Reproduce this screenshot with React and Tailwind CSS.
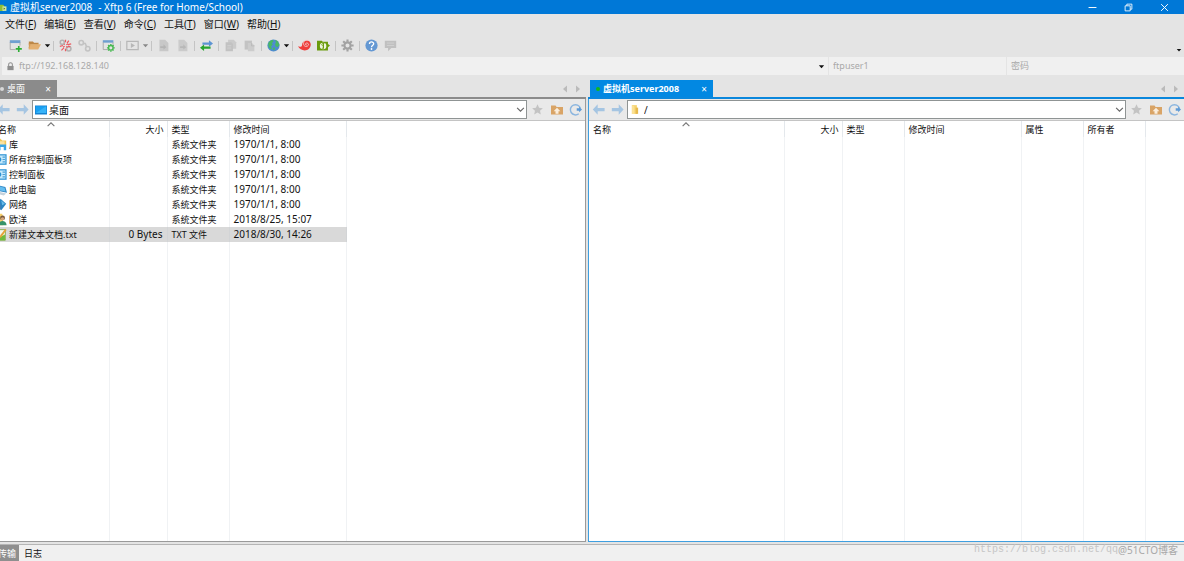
import { useState } from 'react'

const MENUS = [
    ['文件', 'F'], ['编辑', 'E'], ['查看', 'V'], ['命令', 'C'],
    ['工具', 'T'], ['窗口', 'W'], ['帮助', 'H'],
]

const TOOLS = [
    'new', 'open', 'caret', '|', 'disconnect', 'reconnect', '|', 'props', '|',
    'run', 'caretDim', '|', 'docLeft', 'docRight', '|', 'transfer', '|', 'copy', 'paste', '|',
    'globe', 'caret', '|', 'xshell', 'xftp', '|', 'gear', '|', 'help', 'chat',
]

const TOOL_LABELS = {
    new: '新建会话', open: '打开', disconnect: '断开', reconnect: '重新连接', props: '属性',
    run: '执行', docLeft: '向左传输', docRight: '向右传输', transfer: '同步浏览', copy: '复制',
    paste: '粘贴', globe: '编码', xshell: 'Xshell', xftp: 'Xftp', gear: '选项', help: '帮助',
    chat: '反馈', caret: '更多', caretDim: '更多执行选项',
}

const FILES = [
    { icon: 'library', name: '库', size: '', type: '系统文件夹', time: '1970/1/1, 8:00' },
    { icon: 'panel', name: '所有控制面板项', size: '', type: '系统文件夹', time: '1970/1/1, 8:00' },
    { icon: 'panel', name: '控制面板', size: '', type: '系统文件夹', time: '1970/1/1, 8:00' },
    { icon: 'computer', name: '此电脑', size: '', type: '系统文件夹', time: '1970/1/1, 8:00' },
    { icon: 'network', name: '网络', size: '', type: '系统文件夹', time: '1970/1/1, 8:00' },
    { icon: 'user', name: '欧洋', size: '', type: '系统文件夹', time: '2018/8/25, 15:07' },
    { icon: 'text', name: '新建文本文档.txt', size: '0 Bytes', type: 'TXT 文件', time: '2018/8/30, 14:26' },
]

const GEAR = 'M8 2v2M8 12v2M2 8h2M12 8h2M3.8 3.8l1.4 1.4M10.8 10.8l1.4 1.4M3.8 12.2l1.4-1.4M10.8 5.2l1.4-1.4'

const SHAPES = {
    new: (
        <>
            <path d="M1 1.500h13v3.500H1z" fill="#6f9fd0" />
            <path d="M1.500 4v9h6.500M13.500 4v4" fill="none" stroke="#a0a0a0" />
            <path d="M12 8.500v7.500M8.300 12.200h7.500" stroke="#2fae35" strokeWidth="2" />
        </>
    ),
    open: (
        <>
            <path d="M1 3h5l1.500 1.500H13V7H1z" fill="#bd8746" />
            <path d="M3 6.500h13L12.500 13H1V10z" fill="#e3b071" />
            <path d="M1 5v8l2-6z" fill="#d49a56" />
        </>
    ),
    disconnect: (
        <>
            <g fill="none" stroke="#b4b4b4" strokeWidth="2">
                <circle cx="4" cy="4" r="2.500" />
                <circle cx="12" cy="12" r="2.700" />
            </g>
            <path d="M8 1v3M12 2l-2 3M15 6l-4 1M1 9l4-1M3 14l3-3M8 12v3M6 6l1 1M9 9l1.500 1.500M14 9.500l-3-.5M5 10l2-1M9 7l2-1" stroke="#ec5a60" strokeWidth="1.500" />
        </>
    ),
    reconnect: (
        <g fill="none" stroke="#c3c3c3" strokeWidth="2">
            <circle cx="4" cy="4.500" r="2.700" />
            <circle cx="12" cy="12" r="2.700" />
            <path d="M6.500 5.500H9l1.500 4" />
        </g>
    ),
    props: (
        <>
            <path d="M1 1.500h13v3H1z" fill="#6f9fd0" />
            <path d="M1.500 4v9h6M13.500 4v3" fill="none" stroke="#a0a0a0" />
            <g transform="translate(4.500 4.500) scale(.8)" fill="none" stroke="#48b951" strokeWidth="2.200">
                <circle cx="8" cy="8" r="3.500" />
                <path d={GEAR} />
            </g>
        </>
    ),
    run: (
        <>
            <path d="M1 3h14v10H1z" fill="none" stroke="#b7b7b7" strokeWidth="1.500" />
            <path d="M6 5l5 3-5 3z" fill="#b7b7b7" />
        </>
    ),
    docLeft: (
        <>
            <path d="M3 1h7l4 4v10H3z" fill="#c8c8c8" />
            <path d="M4 9h4V6.500L11.500 10 8 13v-2H4z" fill="#b4b4b4" />
        </>
    ),
    docRight: (
        <>
            <path d="M3 1h7l4 4v10H3z" fill="#cbcbcb" />
            <path d="M5 9h4V6.500L12.500 10 9 13v-2H5z" fill="#b8b8b8" />
        </>
    ),
    transfer: (
        <>
            <path d="M3 4.200h8V1.500l5 4-5 4V7H3z" fill="#5c93d2" />
            <path d="M13 9.200H5V6.800l-5 4 5 4V12h8z" fill="#27a52f" />
        </>
    ),
    copy: (
        <>
            <path d="M5 1h7l3 3v8H5z" fill="#cbcbcb" />
            <path d="M2 4h7l2 2v9H2z" fill="#c2c2c2" />
            <path d="M4 8h5M4 10h5M4 12h5" stroke="#d0d0d0" />
        </>
    ),
    paste: (
        <>
            <path d="M2 2h9v11H2z" fill="#c3c3c3" />
            <path d="M6 5h5l3 3v7H6z" fill="#cccccc" />
            <path d="M10.500 5v3.500H14" fill="none" stroke="#b8b8b8" />
        </>
    ),
    globe: (
        <>
            <circle cx="8" cy="8" r="7.500" fill="#4f8cd0" />
            <path d="M1.500 5l2.500-3 3-1 1 2-2 2 1 2-2 2 1 3-1 1-3-3zM10 1l3 1.500 2.300 4.500-2.300 3-2.500-1-.5-3 1-2zM8 10l2 1-1 3-2-1z" fill="#48b865" />
        </>
    ),
    xshell: (
        <>
            <path d="M0 9c2 1 5 1 5-2 0-4 4-6 8-5 3.500 2 3.500 7 .5 10-4 4-11 2-13.500-3z" fill="#ef3d3b" />
            <path d="M14 2c-5-2-8 1-7 5 1 3 5 3 6 0 0-2-3-3-4-1 0 1 1 2 2 1" fill="none" stroke="#f4d6d5" strokeWidth="1" />
        </>
    ),
    xftp: (
        <>
            <path d="M0 2h6l1 1.500h6.500V6L16 8l-2.500 2v4H0z" fill="#6a9b0c" />
            <circle cx="7.500" cy="8.500" r="4" fill="#eef4df" />
            <path d="M9 5.500c-3-1-4 2-2 3s1 3-1 3M8 5v7" fill="none" stroke="#6a9b0c" strokeWidth="1.200" />
        </>
    ),
    gear: (
        <g fill="none" stroke="#a2a2a2" strokeWidth="2.600">
            <circle cx="8" cy="8" r="3.800" />
            <path d="M8 .5v3M8 12.500v3M.5 8h3M12.500 8h3M2.700 2.700l2 2M11.300 11.300l2 2M2.700 13.300l2-2M11.300 4.700l2-2" />
        </g>
    ),
    help: (
        <>
            <circle cx="8" cy="8" r="7.500" fill="#6498d3" />
            <path d="M5.500 6.200c0-3.500 5.200-3.200 5.200-.4C10.700 7.500 8 7.700 8 10" fill="none" stroke="#fff" strokeWidth="1.600" />
            <circle cx="8" cy="12.300" r="1.100" fill="#fff" />
        </>
    ),
    chat: (
        <>
            <path d="M1 2h14v9H9l-4 4v-4H1z" fill="#c0c0c0" />
            <path d="M3.500 5h9M3.500 8h9" stroke="#d4d4d4" />
        </>
    ),
    lock: (
        <>
            <path d="M2.500 7h11v7.500h-11z" fill="#8f8f8f" />
            <path d="M4.700 8V4.500c0-4 6.600-4 6.600 0V8" fill="none" stroke="#8f8f8f" strokeWidth="1.800" />
        </>
    ),
    back: <path d="M1 8l6-6.500V6h8.500v4H7v4.500z" fill="#a5c5e2" />,
    forward: <path d="M15.500 8L9.500 1.500V6H1v4h8.500v4.500z" fill="#a5c5e2" />,
    star: <path d="M8 .5l2.300 5 5.500.6-4.100 3.700 1.100 5.500L8 12.500l-4.800 2.800 1.100-5.500L.2 6.100l5.500-.6z" fill="#c3c3c3" />,
    up: (
        <>
            <path d="M0 2h6l1.500 2H16v10H0z" fill="#d9a466" />
            <path d="M8 5l4.500 4.500H10V13H6V9.500H3.500z" fill="#fbeedd" />
        </>
    ),
    refresh: (
        <>
            <path d="M12 13.200A6.300 6.300 0 1 1 14 6.500" fill="none" stroke="#8cb6df" strokeWidth="1.800" />
            <path d="M9.500 6.500h3V4.500L16 8l-3.500 3.500v-2h-3z" fill="#5f9bd6" />
        </>
    ),
    desktop: (
        <>
            <path d="M0 2h16v12H0z" fill="#1583d2" />
            <path d="M1 3h14v9H1z" fill="#18a0f2" />
            <path d="M1 12L15 3v9z" fill="#36b3f8" />
        </>
    ),
    folder: (
        <>
            <path d="M3 1h8v14H3z" fill="#f6d470" />
            <path d="M9 5h4v10H9z" fill="#e6b94d" />
            <path d="M3 1l4 2v12H3z" fill="#fbe194" />
        </>
    ),
    library: (
        <>
            <path d="M2 1h6l2 2h5v6H2z" fill="#f3c656" />
            <path d="M4 4h9v5H4z" fill="#fbe3a0" />
            <path d="M5 8h10v7h-3v-4H8v4H5z" fill="#3aa5e4" />
        </>
    ),
    panel: (
        <>
            <path d="M0 1.500h15.500v13H0z" fill="#2d93d4" />
            <path d="M1.500 3h12.500v10H1.500z" fill="#c6e9fb" />
            <circle cx="6" cy="8" r="3" fill="#2d93d4" />
            <path d="M10.500 5h3M10.500 8h3M10.500 11h3" stroke="#4ba0d6" strokeWidth="1.400" />
        </>
    ),
    computer: (
        <>
            <path d="M2 2l12 3 2 7L3 9z" fill="#2f86c4" />
            <path d="M3.500 3.500l9.500 2.300 1.300 4.700-9.800-2z" fill="#64bdf0" />
            <path d="M3 10l12 3-3 2.500L1 12z" fill="#c5d2dc" />
        </>
    ),
    network: (
        <>
            <path d="M8 1l7 6-6 8-6-4z" fill="#2b85c2" />
            <path d="M9 3l4.500 4L10 9z" fill="#69bce9" />
            <circle cx="5" cy="11" r="4" fill="#3f7fb4" />
        </>
    ),
    user: (
        <>
            <path d="M1 1h9l1 3v11H1z" fill="#f6d06b" />
            <circle cx="10.500" cy="6" r="3" fill="#7a5a3d" />
            <path d="M5.500 15c0-7 10-7 10 0z" fill="#36936a" />
            <circle cx="10.500" cy="7.200" r="2" fill="#d7a77e" />
        </>
    ),
    text: (
        <>
            <path d="M1 2h13v13H1z" fill="#f7f7ec" stroke="#78a63c" />
            <path d="M1.500 8l6 3 6-3v7h-12z" fill="#6fbb3c" />
            <path d="M6 11L14 1l1.500 1.500-7 9.500z" fill="#e4a336" />
        </>
    ),
    app: (
        <>
            <path d="M2 3h7l2 2v9H2z" fill="#8fbf35" />
            <path d="M8 6h7v8H8z" fill="#d5e8a4" />
            <path d="M10 8l3 2-3 2z" fill="#4b7c0d" />
        </>
    ),
    caret: <path d="M2 5h12l-6 7z" fill="#111" />,
    caretDim: <path d="M2 5h12l-6 7z" fill="#888" />,
    left: <path d="M12 1v14L4 8z" fill="#bbb" />,
    right: <path d="M4 1v14l8-7z" fill="#bbb" />,
    down: <path d="M2 5l6 6 6-6" fill="none" stroke="#666" strokeWidth="2" />,
    sort: <path d="M2 11l6-6 6 6" fill="none" stroke="#777" strokeWidth="2" />,
    min: <path d="M1 8h14" stroke="#fff" strokeWidth="1.700" />,
    max: <path d="M2 5h9v9H2zM5 5V2h9v9h-3" fill="none" stroke="#fff" strokeWidth="1.500" />,
    close: <path d="M2 2l12 12M14 2L2 14" stroke="#fff" strokeWidth="1.700" />,
}

function Icon({ name, className = 'w-[13px] h-[13px]' }) {
    return (
        <svg viewBox="0 0 16 16" aria-hidden="true" className={`shrink-0 ${className}`}>
            {SHAPES[name]}
        </svg>
    )
}

function IconButton({ name, label, className = 'w-[19px]', iconClass }) {
    return (
        <button type="button" aria-label={label} className={`flex shrink-0 items-center justify-center ${className}`}>
            <Icon name={name} className={iconClass} />
        </button>
    )
}

function TitleBar() {
    return (
        <header className="flex h-[14px] shrink-0 items-center bg-[#0078d7] pl-1 text-white">
            <Icon name="app" className="w-[9px] h-[9px]" />
            <h1 className="ml-[3px] flex gap-[6px] whitespace-nowrap text-[10px] leading-[12px]">
                <span>虚拟机server2008</span>
                <span>- Xftp 6 (Free for Home/School)</span>
            </h1>
            <div className="ml-auto flex pr-[2px]">
                <IconButton name="min" label="最小化" className="w-9" iconClass="w-[9px] h-[9px]" />
                <IconButton name="max" label="还原" className="w-9" iconClass="w-[9px] h-[9px]" />
                <IconButton name="close" label="关闭" className="w-9" iconClass="w-[9px] h-[9px]" />
            </div>
        </header>
    )
}

function Toolbar() {
    return (
        <div className="flex h-[23px] shrink-0 items-center pl-3">
            {TOOLS.map((t, i) => {
                if (t === '|') return <span key={i} className="mx-[2px] h-[10px] w-px bg-[#c4c4c4]" />
                if (t.startsWith('caret')) {
                    return <IconButton key={i} name={t} label={TOOL_LABELS[t]} className="w-[7px]" iconClass="w-[7px] h-[7px]" />
                }
                return <IconButton key={i} name={t} label={TOOL_LABELS[t]} />
            })}
            <IconButton name="caret" label="工具栏选项" className="ml-auto w-[10px] self-end pb-[4px]" iconClass="w-[6px] h-[6px]" />
        </div>
    )
}

function AddressBar() {
    const field = 'min-w-0 text-[9px] leading-[12px] outline-none placeholder:text-[#a9a9a9]'
    return (
        <form className="ml-2 flex h-[18px] shrink-0 gap-px text-[#a9a9a9]">
            <div className="flex flex-1 items-center bg-[#f0f0f0] pl-1">
                <Icon name="lock" className="w-[9px] h-[9px]" />
                <input aria-label="主机" className={`${field} ml-1 flex-1`} defaultValue="ftp://192.168.128.140" />
                <IconButton name="caret" label="历史记录" className="w-[14px]" iconClass="w-[7px] h-[7px]" />
            </div>
            <input aria-label="用户名" className={`${field} w-[177px] bg-[#f0f0f0] px-1`} placeholder="ftpuser1" />
            <input aria-label="密码" type="password" className={`${field} w-[177px] bg-[#f0f0f0] px-1`} placeholder="密码" />
        </form>
    )
}

function Pane({ tab, remote, path, pathIcon, columns, files = [], className }) {
    const [value, setValue] = useState(path)
    const [selected, setSelected] = useState(files.length - 1)

    return (
        <section className={`flex min-w-0 flex-col ${className}`}>
            {/* Session tab */}
            <div className={`flex h-[19px] shrink-0 items-stretch border-b-2 ${remote ? 'border-[#0a87dc] pl-[2px]' : 'border-[#8b8b8b]'}`}>
                <div className={`flex items-center text-[9px] leading-[12px] text-white ${remote ? 'w-[123px] bg-[#0288e2] font-bold' : 'w-[63px] bg-[#8b8b8b]'}`}>
                    <span className={`mx-[6px] size-1 shrink-0 rounded-full ${remote ? 'bg-[#12b81b]' : 'bg-[#d8d8d8]'}`} />
                    <span className="-ml-[3px] whitespace-nowrap">{tab}</span>
                    <button type="button" aria-label="关闭标签" className="ml-auto mr-[6px] text-[10px] leading-[12px] font-normal">×</button>
                </div>
                <div className="ml-auto flex pr-[2px]">
                    <IconButton name="left" label="上一个标签" className="w-[13px]" iconClass="w-[8px] h-[8px]" />
                    <IconButton name="right" label="下一个标签" className="w-[13px]" iconClass="w-[8px] h-[8px]" />
                </div>
            </div>

            <div className={`flex min-h-0 flex-1 flex-col border-b ${remote ? 'border-l border-[#3f9fe0]' : 'border-r border-[#9a9a9a]'}`}>
                {/* Path */}
                <div className="flex h-[22px] shrink-0 items-center border-b border-[#c4c4c4] bg-[#e9e9e9]">
                    <IconButton name="back" label="后退" />
                    <IconButton name="forward" label="前进" />
                    <div className="flex h-[19px] min-w-0 flex-1 items-center border border-[#8f9494] bg-white pl-[2px]">
                        <Icon name={pathIcon} className={remote ? 'w-[10px] h-[11px]' : 'w-[12px] h-[12px]'} />
                        <input aria-label={`${tab} 路径`} value={value} onChange={e => setValue(e.target.value)}
                               className={`min-w-0 flex-1 bg-transparent text-[10px] leading-[14px] outline-none ${remote ? 'ml-1' : 'ml-[2px]'}`} />
                        <IconButton name="down" label="展开路径" className="w-3" iconClass="w-[9px] h-[9px]" />
                    </div>
                    <IconButton name="star" label="收藏" className="ml-px w-[19px]" iconClass="w-[11px] h-[11px]" />
                    <IconButton name="up" label="上级目录" iconClass="w-[12px] h-[12px]" />
                    <IconButton name="refresh" label="刷新" />
                </div>

                {/* File list, last row keeps the column lines running to the bottom */}
                <div className="min-h-0 flex-1 bg-white">
                    <table className="h-full w-full table-fixed border-collapse text-[9px] leading-[15px]">
                        <colgroup>
                            {columns.map(c => <col key={c.label} className={c.width} />)}
                            <col />
                        </colgroup>
                        <thead>
                            <tr className="h-[16px]">
                                {columns.map((c, i) => (
                                    <th key={c.label} scope="col"
                                        className={`relative whitespace-nowrap border-r border-[#e4e8ec] p-0 font-normal ${i === 1 ? 'pr-[3px] text-right' : 'pl-1 text-left'}`}>
                                        {c.label}
                                        {i === 0 && <Icon name="sort" className="absolute left-1/2 -top-px h-[9px] w-[9px] -translate-x-1/2" />}
                                    </th>
                                ))}
                                <td />
                            </tr>
                        </thead>
                        <tbody>
                            {files.map((f, i) => {
                                const cell = `whitespace-nowrap border-r p-0 ${i === selected ? 'border-[#d2d4d6] bg-[#d9d9d9]' : 'border-[#f0f2f4]'}`
                                return (
                                    <tr key={f.name} className="h-[15px]" onClick={() => setSelected(i)}>
                                        <td className={cell}>
                                            <div className="flex items-center gap-[2px]">
                                                <Icon name={f.icon} />
                                                <span>{f.name}</span>
                                            </div>
                                        </td>
                                        <td className={`${cell} pr-1 text-right text-[10px]`}>{f.size}</td>
                                        <td className={`${cell} pl-1`}>{f.type}</td>
                                        <td className={`${cell} pl-1 text-[10px]`}>{f.time}</td>
                                        <td />
                                    </tr>
                                )
                            })}
                            <tr>
                                {columns.map(c => <td key={c.label} className="border-r border-[#f0f2f4] p-0" />)}
                                <td />
                            </tr>
                        </tbody>
                    </table>
                </div>
            </div>
        </section>
    )
}

const LOCAL_COLUMNS = [
    { label: '名称', width: 'w-[115px]' },
    { label: '大小', width: 'w-[58px]' },
    { label: '类型', width: 'w-[62px]' },
    { label: '修改时间', width: 'w-[117px]' },
]

const REMOTE_COLUMNS = [
    { label: '名称', width: 'w-[195px]' },
    { label: '大小', width: 'w-[58px]' },
    { label: '类型', width: 'w-[62px]' },
    { label: '修改时间', width: 'w-[117px]' },
    { label: '属性', width: 'w-[62px]' },
    { label: '所有者', width: 'w-[62px]' },
]

export default function App() {
    return (
        <div className="relative h-screen overflow-hidden bg-[#e4e4e4] font-['Noto_Sans','Noto_Sans_CJK_SC',sans-serif] text-[#111]">
            <div className="-ml-[6px] flex h-full flex-col">
                <TitleBar />

                <nav className="flex h-5 shrink-0 items-center gap-2 pl-[11px]">
                    {MENUS.map(([label, key]) => (
                        <button key={key} type="button" className="whitespace-nowrap text-[10px] leading-[14px]">
                            {label}(<u>{key}</u>)
                        </button>
                    ))}
                </nav>

                <Toolbar />
                <AddressBar />

                <main className="mt-[5px] flex min-h-0 flex-1 gap-[2px]">
                    <Pane tab="桌面" path="桌面" pathIcon="desktop" columns={LOCAL_COLUMNS} files={FILES} className="flex-[592]" />
                    <Pane tab="虚拟机server2008" remote path="/" pathIcon="folder" columns={REMOTE_COLUMNS} className="flex-[596]" />
                </main>

                <footer className="mt-[2px] flex h-[17px] shrink-0 border-t border-[#b5b5b5] bg-[#f0f0f0] text-[9px] leading-[18px]">
                    <button type="button" className="w-[25px] bg-[#8f8f8f] pl-1 text-left text-white">传输</button>
                    <button type="button" className="px-[5px]">日志</button>
                </footer>
            </div>

            {/* Watermarks */}
            <p className="pointer-events-none absolute bottom-[4px] right-[66px] font-['Liberation_Mono',monospace] text-[10px] leading-[14px] text-[#c6c6c6]">
                https://blog.csdn.net/qq
            </p>
            <p className="pointer-events-none absolute bottom-[4px] right-[6px] text-[10px] leading-[14px] text-[#a8a8a8]">
                @51CTO博客
            </p>
        </div>
    )
}
